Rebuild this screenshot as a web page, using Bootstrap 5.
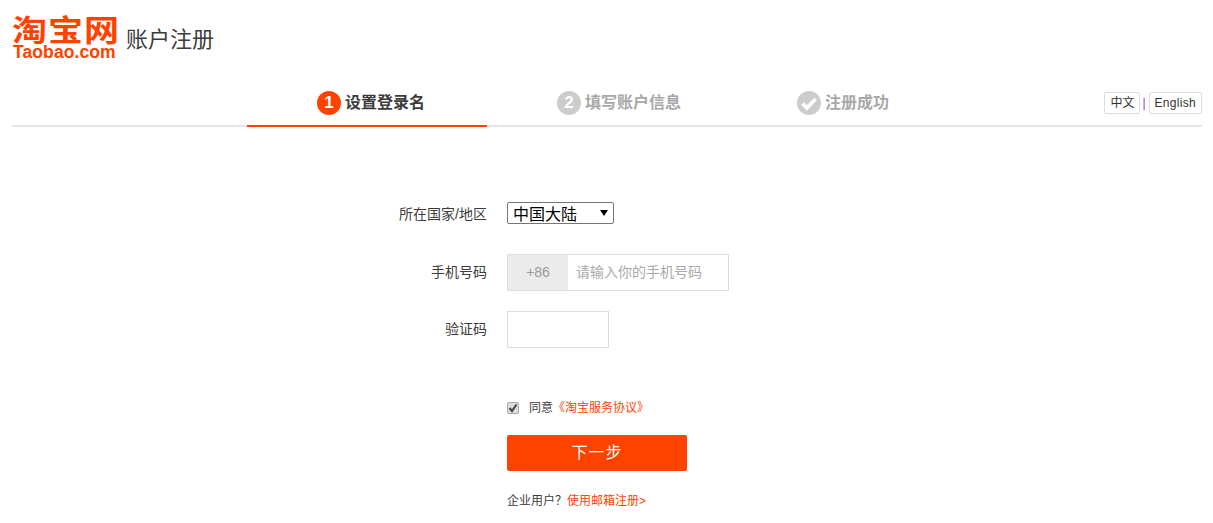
<!DOCTYPE html>
<html lang="zh-CN">
<head>
    <meta charset="UTF-8">
    <meta name="viewport" content="width=device-width, initial-scale=1.0">
    <title>账户注册</title>
    <link href="https://cdn.jsdelivr.net/npm/bootstrap@5.3.0/dist/css/bootstrap.min.css" rel="stylesheet">
    <style>
        body {
            font-family: "Liberation Sans", "Noto Sans CJK SC", sans-serif;
            font-size: 14px;
            color: #3c3c3c;
            background: #fff;
        }

        .page-wrap { padding: 0 11px 0 12px; }

        /* header */
        .top-head { height: 80px; padding-top: 16px; }
        .logo-box { width: 114px; color: #ff4200; font-weight: 700; }
        .logo-cn {
            font-size: 35px;
            line-height: 29px;
            letter-spacing: 1px;
            white-space: nowrap;
            transform: scaleY(.85);
        }
        .logo-en { font-size: 17.5px; line-height: 15px; white-space: nowrap; letter-spacing: .1px; padding-left: 1px; }
        .head-title { font-size: 22px; line-height: 30px; margin-top: 9px; color: #3c3c3c; }

        /* step bar */
        .step-bar { height: 47px; border-bottom: 2px solid #e5e5e5; }
        .step-spacer { width: 235px; }
        .step-item {
            width: 240px;
            height: 47px;
            padding-left: 70px;
            border-bottom: 2px solid transparent;
            font-size: 16px;
            font-weight: 700;
            color: #a8a8a8;
        }
        .step-item.is-on { color: #3c3c3c; border-bottom-color: #ff4200; }
        .step-dot {
            width: 24px;
            height: 24px;
            border-radius: 50%;
            background: #ccc;
            color: #fff;
            font-size: 17px;
            line-height: 24px;
            text-align: center;
            margin-right: 4px;
        }
        .is-on .step-dot { background: #ff4200; }
        .step-dot svg { display: block; }

        .lang-box { top: 12px; right: 0; font-size: 12px; }
        .lang-btn {
            border: 1px solid #ddd;
            border-radius: 2px;
            padding: 0 5px;
            height: 22px;
            line-height: 21px;
            color: #333;
            background: #fff;
            text-decoration: none;
        }
        .lang-en { letter-spacing: .3px; }
        .lang-sep { color: #8e3a9d; margin: 0 3px 0 2px; }

        /* form */
        .reg-form { padding-top: 75px; }
        .form-line { display: flex; align-items: center; }
        .form-tag { width: 475px; margin-right: 20px; text-align: right; flex: none; }
        .tag-low { height: 22px; line-height: 22px; padding-top: 1px; }
        .area-select {
            appearance: none;
            width: 107px;
            height: 22px;
            font-size: 16px;
            padding: 0 1px 0 5px;
            border: 1px solid #767676;
            border-radius: 2px;
            color: #000;
            background: #fff url("data:image/svg+xml,%3Csvg xmlns='http://www.w3.org/2000/svg' width='8' height='6'%3E%3Cpath d='M0 0h8L4 6z' fill='%23000'/%3E%3C/svg%3E") no-repeat right 5px center;
        }
        .phone-wrap { width: 222px; height: 37px; border: 1px solid #ddd; }
        .phone-code {
            width: 60px;
            background: #ebebeb;
            color: #999;
            text-align: center;
            line-height: 35px;
        }
        .reg-input { border: 0; outline: 0; padding: 0 8px; min-width: 0; flex: 1; font-size: 14px; }
        .reg-input::placeholder { color: #aaa; opacity: 1; }
        .code-input { width: 102px; height: 37px; border: 1px solid #ddd; flex: none; }

        .small-line { font-size: 12px; }
        .small-line a, .small-line a:hover { color: #ff4200; text-decoration: none; }
        .agree-check {
            appearance: none;
            width: 12px;
            height: 12px;
            margin: 0 10px 0 0;
            border: 1px solid #aaa;
            border-radius: 2px;
            background: #ddd url("data:image/svg+xml,%3Csvg xmlns='http://www.w3.org/2000/svg' width='10' height='10'%3E%3Cpath d='M1.5 5l2.5 3L8.5 1.5' fill='none' stroke='%23444' stroke-width='2'/%3E%3C/svg%3E") no-repeat center;
        }
        .next-btn {
            width: 180px;
            height: 36px;
            background: #ff4200;
            border: 0;
            border-radius: 2px;
            color: #fff;
            font-size: 16px;
            letter-spacing: 1px;
            padding: 0;
        }
        .next-btn:hover { background: #ff4200; color: #fff; }
        .push-left { padding-left: 495px; }
        .gap-phone { margin-top: 30px; }
        .gap-code { margin-top: 20px; }
        .gap-agree { margin-top: 51px; }
        .gap-next { margin-top: 18px; }
        .gap-corp { margin-top: 21px; }
    </style>
</head>
<body>
    <div class="page-wrap">
        <!-- header -->
        <div class="top-head d-flex">
            <div class="logo-box">
                <div class="logo-cn">淘宝网</div>
                <div class="logo-en">Taobao.com</div>
            </div>
            <div class="head-title">账户注册</div>
        </div>

        <!-- steps -->
        <div class="step-bar d-flex position-relative">
            <div class="step-spacer"></div>
            <div class="step-item is-on d-flex align-items-center">
                <span class="step-dot">1</span>设置登录名
            </div>
            <div class="step-item d-flex align-items-center">
                <span class="step-dot">2</span>填写账户信息
            </div>
            <div class="step-item d-flex align-items-center">
                <span class="step-dot">
                    <svg width="24" height="24" viewBox="0 0 24 24"><path d="M5.5 12.5l4.5 4.5 8.5-9" fill="none" stroke="#fff" stroke-width="3.8"/></svg>
                </span>注册成功
            </div>
            <div class="lang-box position-absolute d-flex align-items-center">
                <a href="#" class="lang-btn">中文</a>
                <span class="lang-sep">|</span>
                <a href="#" class="lang-btn lang-en">English</a>
            </div>
        </div>

        <!-- form -->
        <form class="reg-form">
            <div class="form-line">
                <label class="form-tag tag-low">所在国家/地区</label>
                <select class="area-select"><option>中国大陆</option></select>
            </div>
            <div class="form-line gap-phone">
                <label class="form-tag">手机号码</label>
                <div class="phone-wrap d-flex">
                    <div class="phone-code">+86</div>
                    <input class="reg-input" type="text" placeholder="请输入你的手机号码">
                </div>
            </div>
            <div class="form-line gap-code">
                <label class="form-tag">验证码</label>
                <input class="reg-input code-input" type="text">
            </div>
            <div class="small-line push-left d-flex align-items-center gap-agree">
                <input class="agree-check" type="checkbox" checked>
                <span>同意</span><a href="#">《淘宝服务协议》</a>
            </div>
            <div class="push-left gap-next">
                <button type="button" class="btn next-btn">下一步</button>
            </div>
            <div class="small-line push-left gap-corp">
                企业用户？<a href="#">使用邮箱注册&gt;</a>
            </div>
        </form>
    </div>
    <script src="https://cdn.jsdelivr.net/npm/bootstrap@5.3.0/dist/js/bootstrap.bundle.min.js"></script>
</body>
</html>
